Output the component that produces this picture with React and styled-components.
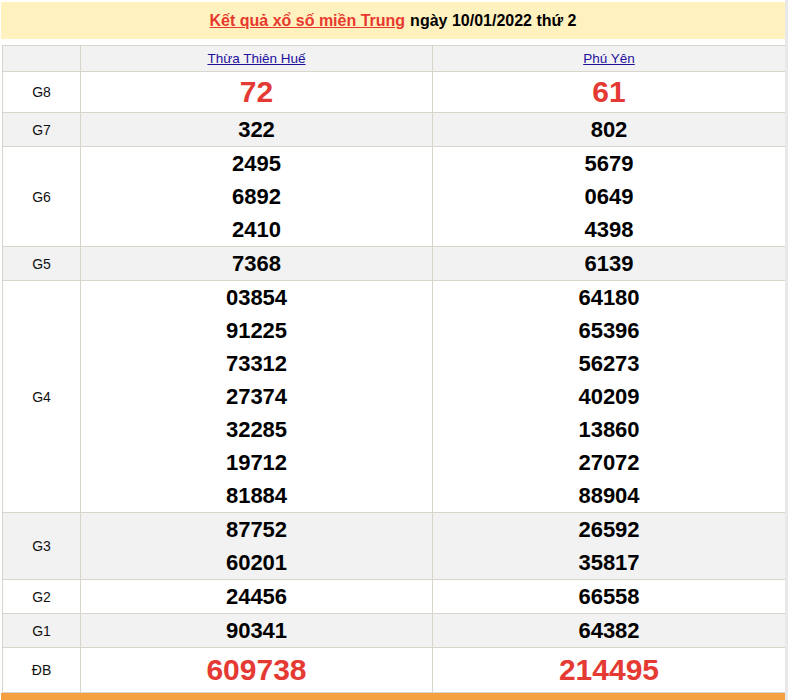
import React from 'react';
import styled, { createGlobalStyle } from 'styled-components';

const GlobalStyle = createGlobalStyle`
  body {
    margin: 0;
    background: #fff;
    font-family: "Liberation Sans", Arial, sans-serif;
  }
`;

const Page = styled.div`
  width: 784px;
  padding: 2px 0 0 1px;
  border-right: 3px solid #e8e8e8;
  overflow: hidden;
  height: 698px;
`;

const Title = styled.div`
  background: #fff2bf;
  height: 37px;
  display: flex;
  align-items: center;
  justify-content: center;
  font-size: 16px;
  font-weight: 700;
  color: #000;
  margin-bottom: 6px;

  a {
    color: #e8382e;
    text-decoration: underline;
    margin-right: 5px;
  }
`;

const Table = styled.table`
  width: 784px;
  margin-left: 1px;
  border-collapse: collapse;
  table-layout: fixed;

  td, th {
    border: 1px solid #d9d4cc;
    padding: 0;
    text-align: center;
  }
`;

const HeadRow = styled.tr`
  background: #f2f2f2;
  th {
    height: 25px;
    font-weight: 400;
    font-size: 13.5px;
  }
  a {
    color: #22109f;
    text-decoration: underline;
  }
`;

const Row = styled.tr`
  background: ${p => (p.$alt ? '#f2f2f2' : '#fff')};
`;

const Label = styled.td`
  font-size: 14px;
  color: #111;
`;

const Num = styled.div`
  font-weight: 700;
  font-size: ${p => (p.$big ? '30px' : '22px')};
  line-height: ${p => (p.$big ? p.$lh : '33px')};
  color: ${p => (p.$red ? '#e53a33' : '#000')};
`;

const Footer = styled.div`
  background: #f4a041;
  height: 40px;
  color: #fff;
  font-weight: 700;
  font-size: 16px;
  display: flex;
  justify-content: flex-end;
  padding: 5px 78px 0 0;
`;

const prizes = [
  { g: 'G8', a: ['72'], b: ['61'], big: true, red: true, lh: '40px' },
  { g: 'G7', a: ['322'], b: ['802'] },
  { g: 'G6', a: ['2495', '6892', '2410'], b: ['5679', '0649', '4398'] },
  { g: 'G5', a: ['7368'], b: ['6139'] },
  {
    g: 'G4',
    a: ['03854', '91225', '73312', '27374', '32285', '19712', '81884'],
    b: ['64180', '65396', '56273', '40209', '13860', '27072', '88904'],
  },
  { g: 'G3', a: ['87752', '60201'], b: ['26592', '35817'] },
  { g: 'G2', a: ['24456'], b: ['66558'] },
  { g: 'G1', a: ['90341'], b: ['64382'] },
  { g: 'ĐB', a: ['609738'], b: ['214495'], big: true, red: true, lh: '44px' },
];

const Cell = ({ nums, p }) => (
  <td>
    {nums.map(n => (
      <Num key={n} $big={p.big} $red={p.red} $lh={p.lh}>
        {n}
      </Num>
    ))}
  </td>
);

export default function App() {
  return (
    <>
      <GlobalStyle />
      <Page>
        <Title>
          <a href="#">Kết quả xổ số miền Trung</a> ngày 10/01/2022 thứ 2
        </Title>
        <Table>
          <colgroup>
            <col style={{ width: 78 }} />
            <col style={{ width: 352 }} />
            <col style={{ width: 353 }} />
          </colgroup>
          <thead>
            <HeadRow>
              <th></th>
              <th><a href="#">Thừa Thiên Huế</a></th>
              <th><a href="#">Phú Yên</a></th>
            </HeadRow>
          </thead>
          <tbody>
            {prizes.map((p, i) => (
              <Row key={p.g} $alt={i % 2 === 1}>
                <Label>{p.g}</Label>
                <Cell nums={p.a} p={p} />
                <Cell nums={p.b} p={p} />
              </Row>
            ))}
          </tbody>
        </Table>
        <Footer>Mở</Footer>
      </Page>
    </>
  );
}
